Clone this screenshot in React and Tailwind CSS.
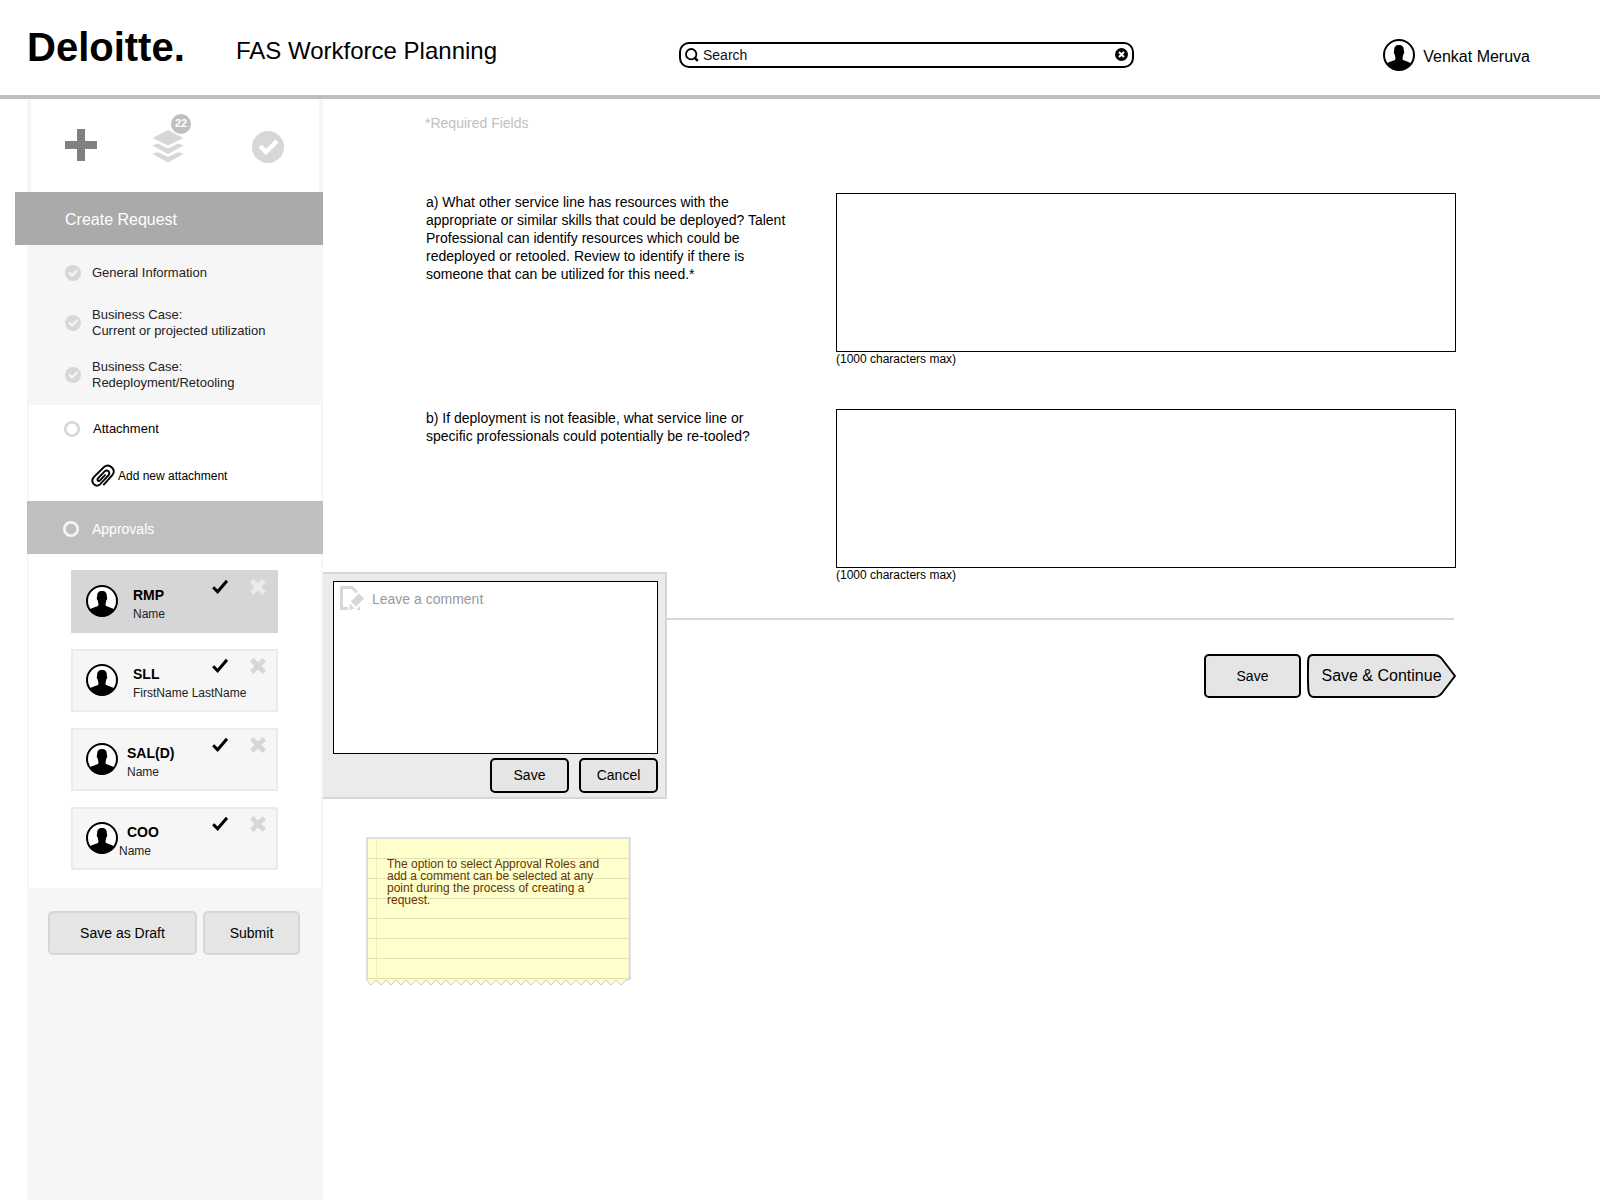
import React from "react";
import clsx from "clsx";

const approvers = [
	{ role: "RMP", name: "Name", active: true },
	{ role: "SLL", name: "FirstName LastName" },
	{ role: "SAL(D)", name: "Name", tight: true },
	{ role: "COO", name: "Name", tight: true, nameClass: "-ml-2" },
];

const Avatar = () => (
	<svg width="32" height="32" viewBox="0 0 32 32" className="shrink-0">
		<circle cx="16" cy="16" r="15" fill="#fff" stroke="#000" strokeWidth="2" />
		<path d="M16 6C12.6 6 11.1 8 11.2 11C11.2 12 10.6 12.3 10.8 13.6C10.9 14.8 11.3 15.3 11.8 15.6C11.9 16.8 12 17.6 12.4 18.4V20.6C11 22 6.6 22.4 3.6 24.6C6.4 28.8 10.8 31.4 16 31.4S25.6 28.8 28.4 24.6C25.4 22.4 21 22 19.6 20.6V18.4C20 17.6 20.1 16.8 20.2 15.6C20.7 15.3 21.1 14.8 21.2 13.6C21.4 12.3 20.8 12 20.8 11C20.9 8 19.4 6 16 6Z" />
	</svg>
);

const CheckCircle = ({ size, mark }) => (
	<svg width={size} height={size} viewBox="0 0 32 32" className="shrink-0">
		<circle cx="16" cy="16" r="16" fill="#d7d7d7" />
		<path
			d="M8.2 15L14 21L25 10"
			fill="none"
			stroke={mark}
			strokeWidth="4.4"
		/>
	</svg>
);

const Ring = ({ color }) => (
	<svg width="16" height="16" viewBox="0 0 16 16" className="shrink-0">
		<circle cx="8" cy="8" r="6.7" fill="none" stroke={color} strokeWidth="2.6" />
	</svg>
);

const Layers = () => (
	<svg width="32" height="34" viewBox="0 0 32 34" fill="#d7d7d7">
		<path d="M16 1L31.5 9L16 16.5L0.5 9Z" />
		<path d="M0.5 16.5L5.5 14.5L16 19.5L26.5 14.5L31.5 16.5L16 25Z" />
		<path d="M0.5 25L5.5 23L16 28L26.5 23L31.5 25L16 33.5Z" />
	</svg>
);

const Paperclip = () => (
	<svg
		width="24"
		height="24"
		viewBox="0 0 24 24"
		fill="none"
		stroke="#000"
		strokeWidth="1.9"
		strokeLinecap="round"
	>
		<path d="M12.8 20.6L21.5 10.8C25.4 5.4 18.2 -1.4 13 3L2.8 13.2C-1 18 4 24 9 20.4L17.6 11.2C19.6 8.2 16.4 5 13.6 7.4L7 14.4C5.6 16.4 7.6 17.8 9 16.4L14 11.2" />
	</svg>
);

const CommentIcon = () => (
	<svg width="24" height="24" viewBox="0 0 24 24" fill="#d7d7d7">
		<path d="M0 0H12.5L18 5.5L16 7.5L11.5 3H3V21H8V24H0Z" />
		<path d="M19 7.5L24 12.5L16 20.5L11 15.5Z" />
		<path d="M10 17.5L14.5 22.5L9 24Z" />
		<path d="M20 20V24H16Z" />
	</svg>
);

const StepItem = ({ children, className }) => (
	<li className={clsx("flex items-center gap-[11px] pl-[38px]", className)}>
		<CheckCircle size={16} mark="#f6f6f6" />
		<a href="#" className="text-[#222]">
			{children}
		</a>
	</li>
);

const ApproverCard = ({ approver }) => (
	<li
		className={clsx(
			"flex items-start h-[63px] border-2 pl-[13px] pr-2.5",
			approver.active
				? "bg-[#d6d6d6] border-[#d6d6d6]"
				: "bg-[#f6f6f6] border-[#ebebeb]"
		)}
	>
		<div className="pt-[13px]">
			<Avatar />
		</div>
		<div
			className={clsx(
				"flex-1 pt-[13px] whitespace-nowrap",
				approver.tight ? "pl-[9px]" : "pl-[15px]"
			)}
		>
			<p className="text-sm leading-5 font-bold">{approver.role}</p>
			<p className={clsx("text-xs leading-[18px] text-[#222]", approver.nameClass)}>
				{approver.name}
			</p>
		</div>
		<div className="w-[54px] -ml-[54px] shrink-0 flex items-center justify-between pt-[7px]">
			<button type="button" aria-label="Approve">
				<svg width="16" height="16" viewBox="0 0 16 16" className="block">
					<path d="M1.2 8.2L5.6 12.8L15 1.8" fill="none" stroke="#000" strokeWidth="3" />
				</svg>
			</button>
			<button type="button" aria-label="Reject">
				<svg width="16" height="16" viewBox="0 0 16 16" className="block">
					<path
						d="M1.8 1.8L14.2 14.2M14.2 1.8L1.8 14.2"
						stroke={approver.active ? "#ebebeb" : "#d7d7d7"}
						strokeWidth="5"
					/>
				</svg>
			</button>
		</div>
	</li>
);

const CommentPopover = () => (
	<form className="absolute z-10 left-full top-[18px] w-[344px] bg-[#ebebeb] border-2 border-l-0 border-[#d6d6d6] pl-2.5 pr-[7px] pt-[7px] pb-1">
		<div className="flex items-start gap-2 h-[173px] bg-white border border-black pl-1.5 pt-1">
			<CommentIcon />
			<textarea
				aria-label="Comment"
				placeholder="Leave a comment"
				className="flex-1 h-40 pt-[3px] text-sm leading-5 resize-none outline-none placeholder:text-[#999]"
			/>
		</div>
		<div className="flex justify-end gap-2.5 mt-1">
			<button
				type="button"
				className="w-[79px] h-[35px] pb-0.5 text-sm bg-[#e5e5e5] border-2 border-black rounded-[5px]"
			>
				Save
			</button>
			<button
				type="button"
				className="w-[79px] h-[35px] pb-0.5 text-sm bg-[#e5e5e5] border-2 border-black rounded-[5px]"
			>
				Cancel
			</button>
		</div>
	</form>
);

const Sidebar = () => (
	<aside className="w-[296px] ml-[27px] shrink-0 bg-[#f6f6f6]">
		<nav className="flex items-center h-[93px] mx-1 pl-[34px] bg-white">
			<button type="button" aria-label="Create request" className="pb-0.5">
				<svg width="32" height="32" viewBox="0 0 32 32" className="block">
					<path d="M12 0H20V12H32V20H20V32H12V20H0V12H12Z" fill="#7f7f7f" />
				</svg>
			</button>
			<button type="button" aria-label="Requests" className="relative ml-[55px]">
				<Layers />
				<span className="absolute -top-[15px] left-[19px] size-5 rounded-full bg-[#bfbfbf] text-white text-[11px] leading-[18px] font-bold text-center">
					22
				</span>
			</button>
			<button type="button" aria-label="Completed" className="ml-[68px] pt-0.5">
				<CheckCircle size={32} mark="#fff" />
			</button>
		</nav>

		<h2 className="-ml-3 h-[53px] pl-[50px] leading-[55px] bg-[#aaa] text-white text-base">
			Create Request
		</h2>

		<ul className="pt-5 pb-3.5 text-[13px] leading-4">
			<StepItem className="mb-[26px]">General Information</StepItem>
			<StepItem className="mb-5">
				Business Case:
				<br />
				Current or projected utilization
			</StepItem>
			<StepItem>
				Business Case:
				<br />
				Redeployment/Retooling
			</StepItem>
		</ul>

		<section className="mx-0.5 pt-4 pb-[13px] pl-[35px] bg-white">
			<div className="flex items-center gap-[13px]">
				<Ring color="#d7d7d7" />
				<h3 className="text-[13px] leading-4">Attachment</h3>
			</div>
			<button
				type="button"
				className="flex items-center gap-[3px] mt-[27px] ml-[27px] text-xs"
			>
				<Paperclip />
				Add new attachment
			</button>
		</section>

		<h3 className="flex items-center gap-[13px] h-[53px] pl-9 pt-[3px] bg-[#bfbfbf] text-white text-sm">
			<Ring color="#f6f6f6" />
			Approvals
		</h3>

		<section className="relative px-0.5">
			<ul className="flex flex-col gap-4 pt-4 pb-[18px] pl-[42px] pr-[43px] bg-white">
				{approvers.map((approver) => (
					<ApproverCard key={approver.role} approver={approver} />
				))}
			</ul>
			<CommentPopover />
		</section>

		<div className="flex gap-1.5 pt-[23px] pl-[21px] text-sm">
			<button
				type="button"
				className="w-[149px] h-11 bg-[#e5e5e5] border-2 border-[#d6d6d6] rounded-[5px]"
			>
				Save as Draft
			</button>
			<button
				type="button"
				className="w-[97px] h-11 bg-[#e5e5e5] border-2 border-[#d6d6d6] rounded-[5px]"
			>
				Submit
			</button>
		</div>
	</aside>
);

const Question = ({ id, children }) => (
	<div className="flex items-start">
		<label htmlFor={id} className="w-[410px] shrink-0 pr-11 text-sm leading-[18px]">
			{children}
		</label>
		<div className="flex-1">
			<textarea id={id} className="block w-full h-[159px] border border-black resize-none" />
			<p className="mt-px text-xs leading-3">(1000 characters max)</p>
		</div>
	</div>
);

const StickyNote = () => (
	<div className="relative w-[265px] h-[149px] ml-[43px] mt-[139px] pt-[21px] pl-[21px] pr-6">
		<svg width="265" height="149" viewBox="0 0 265 149" className="absolute inset-0">
			<path
				d={`M0.5 0.5H264V142.5${Array.from(
					{ length: 26 },
					(_, i) => `L${260 - i * 10} 143L${255 - i * 10} 148`
				).join("")}L0.5 143Z`}
				fill="#ffffcc"
				stroke="#c8c8c0"
			/>
			<path d="M1 1H263.5V143M1 1V143" fill="none" stroke="#dedede" strokeWidth="2" />
			<path
				d="M1 21.5H263M1 41.5H263M1 61.5H263M1 81.5H263M1 101.5H263M1 121.5H263M1 141.5H263"
				stroke="#e3e0b4"
			/>
			<path d="M10.5 2V142" stroke="#f7e8b8" />
		</svg>
		<p className="relative text-xs leading-3 text-[#663300]">
			The option to select Approval Roles and add a comment can be selected at any
			point during the process of creating a request.
		</p>
	</div>
);

const App = () => (
	<div className="min-h-screen flex flex-col bg-white text-black font-['Liberation_Sans',Arial,sans-serif]">
		<header className="flex items-center h-[99px] pl-[27px] pr-[70px] border-b-4 border-[#bfbfbf]">
			<a
				href="#"
				className="w-[209px] shrink-0 pb-0.5 text-[40px] leading-[48px] font-bold"
			>
				Deloitte.
			</a>
			<h1 className="w-[443px] shrink-0 pt-1.5 text-2xl">FAS Workforce Planning</h1>
			<div className="flex-1 pt-3.5 mr-[249px]">
				<label className="flex items-center h-[26px] pl-1 pr-1 border-2 border-black rounded-[10px]">
					<svg
						width="14"
						height="14"
						viewBox="0 0 14 14"
						fill="none"
						stroke="#000"
						className="shrink-0"
					>
						<circle cx="6.2" cy="6.2" r="5.2" strokeWidth="1.8" />
						<path d="M9.8 9.8L12.8 12.8" strokeWidth="2.4" />
					</svg>
					<input
						type="text"
						aria-label="Search"
						placeholder="Search"
						className="flex-1 min-w-0 pl-1 text-sm leading-5 outline-none placeholder:text-[#111]"
					/>
					<button type="button" aria-label="Clear search">
						<svg width="13" height="13" viewBox="0 0 13 13" className="block">
							<circle cx="6.5" cy="6.5" r="6.5" />
							<path d="M4 4L9 9M9 4L4 9" stroke="#fff" strokeWidth="2" />
						</svg>
					</button>
				</label>
			</div>
			<a
				href="#"
				className="flex items-center gap-2 pt-[15px] text-base whitespace-nowrap"
			>
				<Avatar />
				<span className="pt-1">Venkat Meruva</span>
			</a>
		</header>

		<div className="flex flex-1">
			<Sidebar />
			<main className="flex-1 min-w-0 pt-[15px]">
				<form className="pl-[102px] pr-36">
					<p className="text-sm leading-[18px] text-[#bfbfbf]">*Required Fields</p>
					<div className="flex flex-col gap-11 mt-[61px] pl-px">
						<Question id="service-line">
							a) What other service line has resources with the appropriate or similar
							skills that could be deployed? Talent Professional can identify resources
							which could be redeployed or retooled. Review to identify if there is
							someone that can be utilized for this need.*
						</Question>
						<Question id="retool">
							b) If deployment is not feasible, what service line or specific
							professionals could potentially be re-tooled?
						</Question>
					</div>
					<hr className="mt-[37px] mr-0.5 border-t-2 border-[#d6d6d6]" />
					<div className="flex justify-end gap-1.5 mt-[34px]">
						<button
							type="button"
							className="w-[97px] h-11 text-sm bg-[#e5e5e5] border-2 border-black rounded-[5px]"
						>
							Save
						</button>
						<button
							type="submit"
							className="relative w-[149px] h-11 text-base whitespace-nowrap"
						>
							<svg
								width="149"
								height="44"
								viewBox="0 0 149 44"
								className="absolute inset-0"
							>
								<path
									d="M6 1H127C131 1 133 2.5 135 5L148 22L135 39C133 41.5 131 43 127 43H7C3 43 1.6 40 1.4 36C0.8 28 0.9 14 1.2 6C1.4 2.5 2.5 1 6 1Z"
									fill="#e5e5e5"
									stroke="#000"
									strokeWidth="2"
								/>
							</svg>
							<span className="relative">Save &amp; Continue</span>
						</button>
					</div>
				</form>
				<StickyNote />
			</main>
		</div>
	</div>
);

export default App;
